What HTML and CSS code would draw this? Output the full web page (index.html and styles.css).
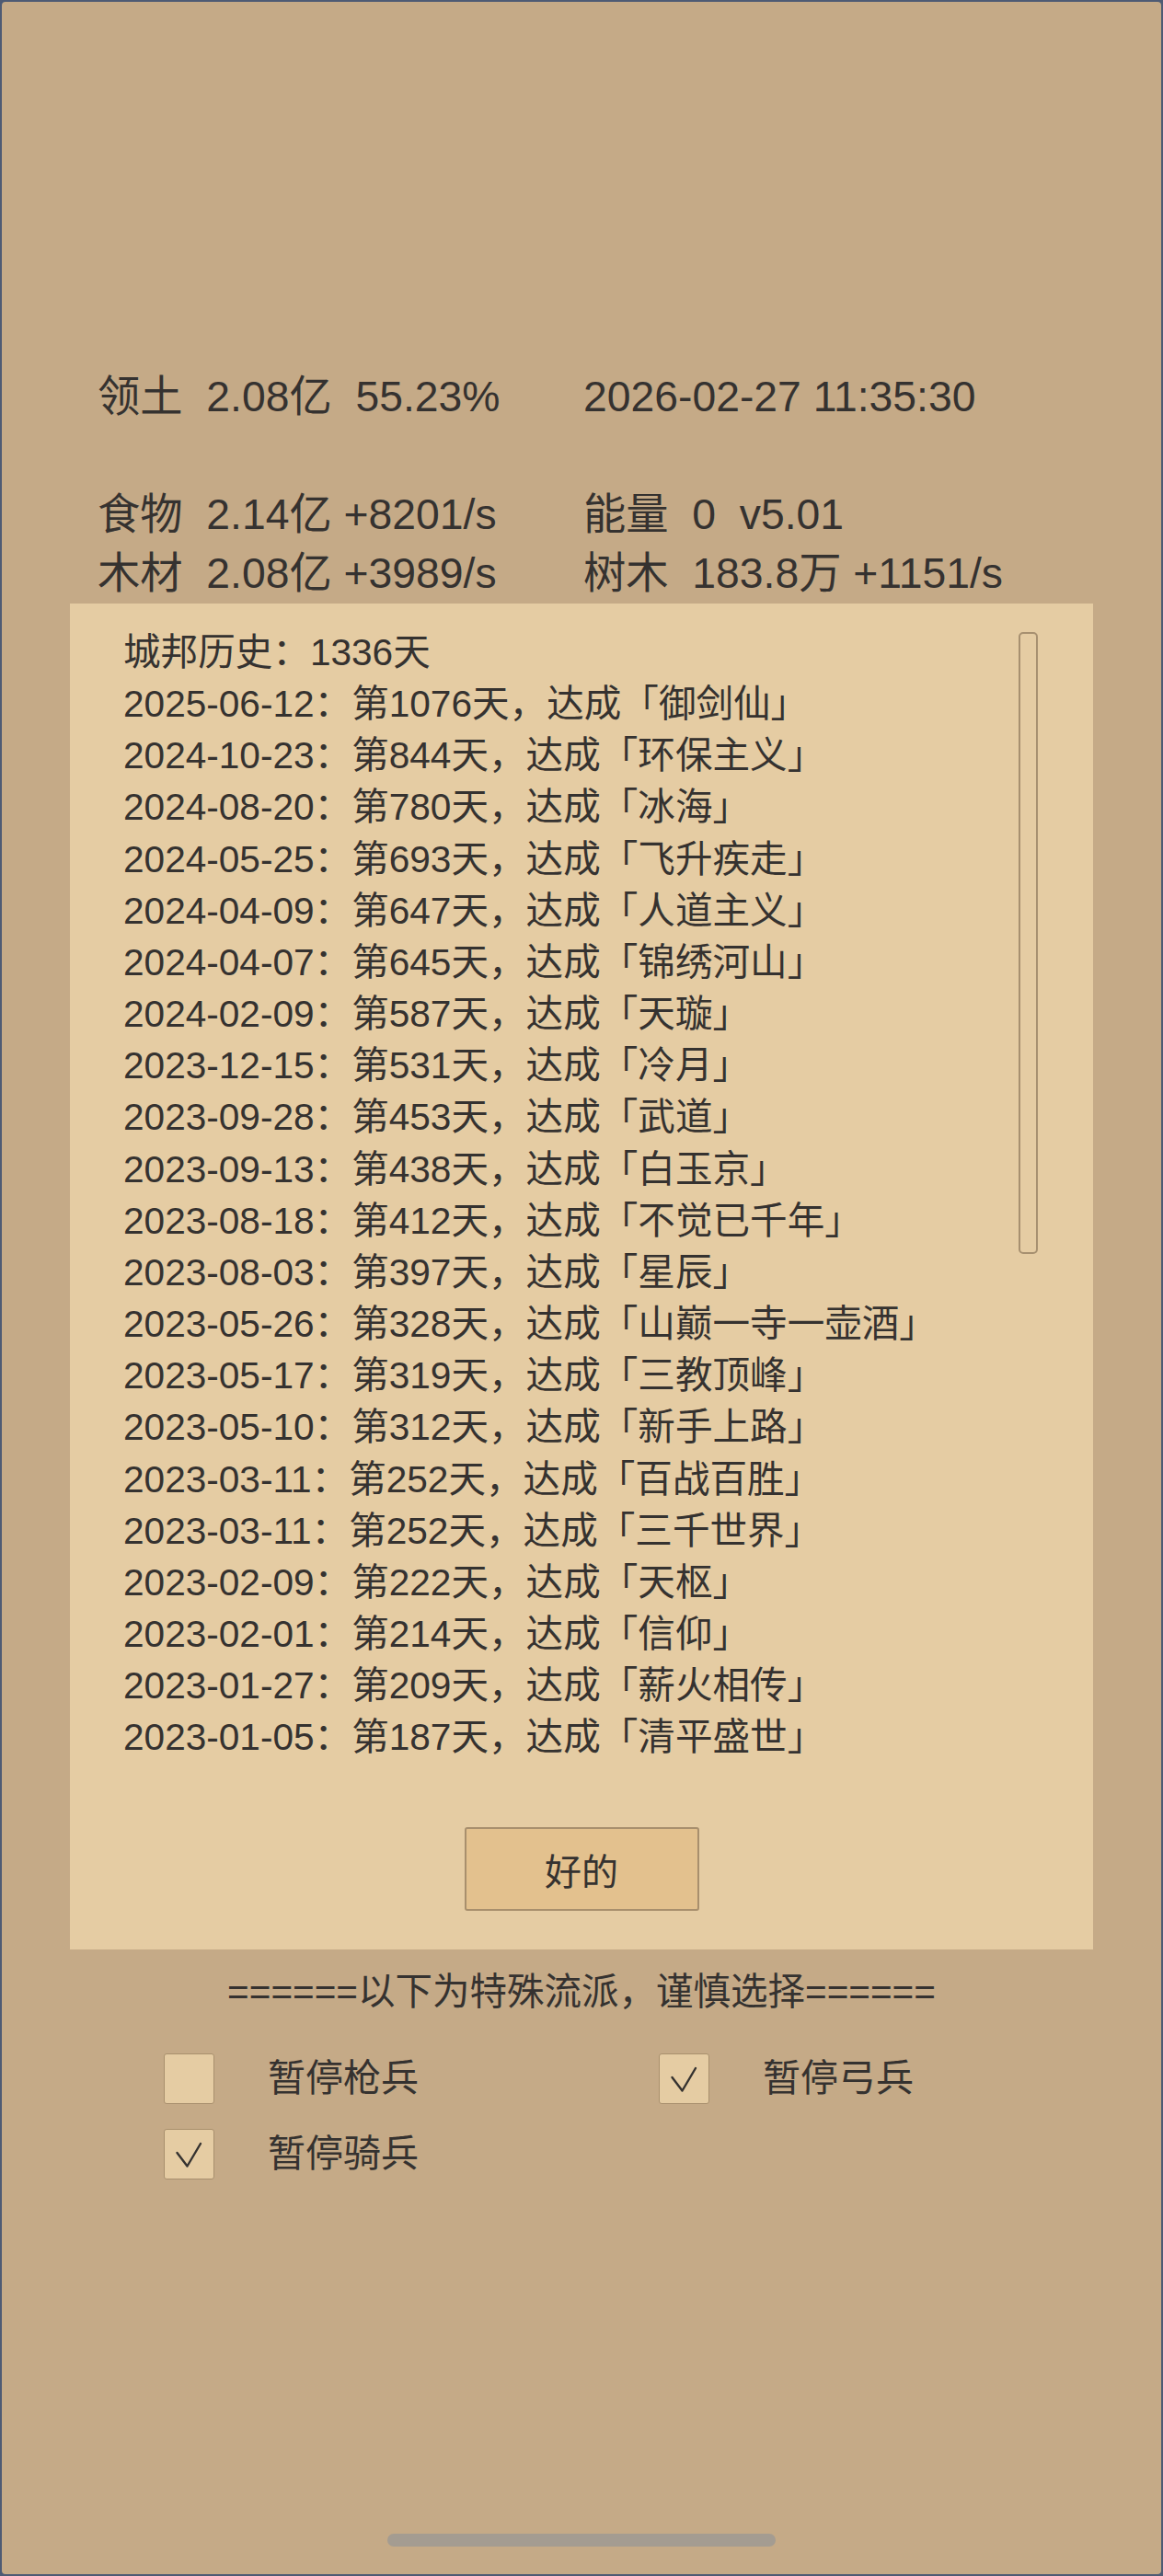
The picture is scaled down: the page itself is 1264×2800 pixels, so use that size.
FILE: index.html
```html
<!DOCTYPE html>
<html lang="zh-CN">
<head>
<meta charset="utf-8">
<title>城邦历史</title>
<link rel="stylesheet" href="styles.css">
</head>
<body>
<div class="screen">
  <div class="stats">
    <div class="cell">领土&nbsp;&nbsp;2.08亿&nbsp;&nbsp;55.23%</div>
    <div class="cell">2026-02-27 11:35:30</div>
    <div class="blank"></div>
    <div class="cell">食物&nbsp;&nbsp;2.14亿 +8201/s</div>
    <div class="cell">能量&nbsp;&nbsp;0&nbsp;&nbsp;v5.01</div>
    <div class="cell">木材&nbsp;&nbsp;2.08亿 +3989/s</div>
    <div class="cell">树木&nbsp;&nbsp;183.8万 +1151/s</div>
  </div>

  <div class="panel">
    <div class="scroll-thumb"></div>
    <ul class="history">
      <li>城邦历史：1336天</li>
      <li>2025-06-12：第1076天，达成「御剑仙」</li>
      <li>2024-10-23：第844天，达成「环保主义」</li>
      <li>2024-08-20：第780天，达成「冰海」</li>
      <li>2024-05-25：第693天，达成「飞升疾走」</li>
      <li>2024-04-09：第647天，达成「人道主义」</li>
      <li>2024-04-07：第645天，达成「锦绣河山」</li>
      <li>2024-02-09：第587天，达成「天璇」</li>
      <li>2023-12-15：第531天，达成「冷月」</li>
      <li>2023-09-28：第453天，达成「武道」</li>
      <li>2023-09-13：第438天，达成「白玉京」</li>
      <li>2023-08-18：第412天，达成「不觉已千年」</li>
      <li>2023-08-03：第397天，达成「星辰」</li>
      <li>2023-05-26：第328天，达成「山巅一寺一壶酒」</li>
      <li>2023-05-17：第319天，达成「三教顶峰」</li>
      <li>2023-05-10：第312天，达成「新手上路」</li>
      <li>2023-03-11：第252天，达成「百战百胜」</li>
      <li>2023-03-11：第252天，达成「三千世界」</li>
      <li>2023-02-09：第222天，达成「天枢」</li>
      <li>2023-02-01：第214天，达成「信仰」</li>
      <li>2023-01-27：第209天，达成「薪火相传」</li>
      <li>2023-01-05：第187天，达成「清平盛世」</li>
    </ul>
    <div class="actions">
      <button class="ok-btn" type="button">好的</button>
    </div>
  </div>

  <div class="separator">======以下为特殊流派，谨慎选择======</div>

  <div class="options">
    <label class="option">
      <span class="box"></span>
      <span class="opt-label">暂停枪兵</span>
    </label>
    <label class="option">
      <span class="box"><svg viewBox="0 0 55 55" width="55" height="55"><path d="M14.5 26 L25.5 40.5 L40 16" fill="none" stroke="#353230" stroke-width="2.4" stroke-linecap="round" stroke-linejoin="round"/></svg></span>
      <span class="opt-label">暂停弓兵</span>
    </label>
    <label class="option">
      <span class="box"><svg viewBox="0 0 55 55" width="55" height="55"><path d="M14.5 26 L25.5 40.5 L40 16" fill="none" stroke="#353230" stroke-width="2.4" stroke-linecap="round" stroke-linejoin="round"/></svg></span>
      <span class="opt-label">暂停骑兵</span>
    </label>
  </div>

  <div class="home-indicator"></div>
</div>
</body>
</html>
```

FILE: styles.css
```css
html, body {
  margin: 0;
  padding: 0;
  background: #4e5b74;
}

body {
  font-family: "Liberation Sans", "Noto Sans CJK SC", sans-serif;
  color: #353230;
}

.screen {
  box-sizing: border-box;
  height: 2800px;
  border: 2px solid #4e5b74;
  border-radius: 6px;
  background: #c5aa87;
  display: flex;
  flex-direction: column;
}

.stats {
  display: grid;
  grid-template-columns: 528px auto;
  padding: 397px 0 0 104px;
  font-size: 46.3px;
  line-height: 64px;
  white-space: nowrap;
}

.blank {
  grid-column: 1 / 3;
  height: 64px;
}

.panel {
  position: relative;
  margin: 1px 0 0 74px;
  width: 1112px;
  box-sizing: border-box;
  padding: 25px 0 42px 58px;
  background: #e5cca3;
}

.scroll-thumb {
  position: absolute;
  top: 31px;
  right: 60px;
  width: 21px;
  height: 676px;
  box-sizing: border-box;
  border: 2px solid #a79070;
  border-radius: 5px;
}

.history {
  list-style: none;
  margin: 0;
  padding: 0;
  font-size: 40.6px;
  line-height: 56.15px;
  white-space: nowrap;
}

.actions {
  display: flex;
  justify-content: center;
  margin: 70px 0 0 -58px;
}

.ok-btn {
  width: 255px;
  height: 91px;
  box-sizing: border-box;
  background: #e3c18e;
  border: 2px solid #a88f6d;
  border-radius: 3px;
  font-family: "Liberation Sans", "Noto Sans CJK SC", sans-serif;
  font-size: 40px;
  color: #353230;
  padding: 0;
}

.separator {
  margin-top: 18px;
  text-align: center;
  font-size: 40.5px;
  line-height: 56px;
  white-space: nowrap;
}

.options {
  display: grid;
  grid-template-columns: 538px auto;
  row-gap: 27px;
  margin: 39px 0 0 176px;
}

.option {
  display: flex;
  align-items: center;
}

.box {
  width: 55px;
  height: 55px;
  box-sizing: border-box;
  border: 1.5px solid #a88f6d;
  border-radius: 3px;
  background: #e5cca3;
  display: flex;
  align-items: center;
  justify-content: center;
  flex: none;
}

.box svg {
  display: block;
  flex: none;
}

.opt-label {
  margin-left: 58px;
  font-size: 41px;
  line-height: 55px;
}

.home-indicator {
  margin: auto auto 30px;
  width: 422px;
  height: 14px;
  border-radius: 7px;
  background: #a49c91;
}
```
